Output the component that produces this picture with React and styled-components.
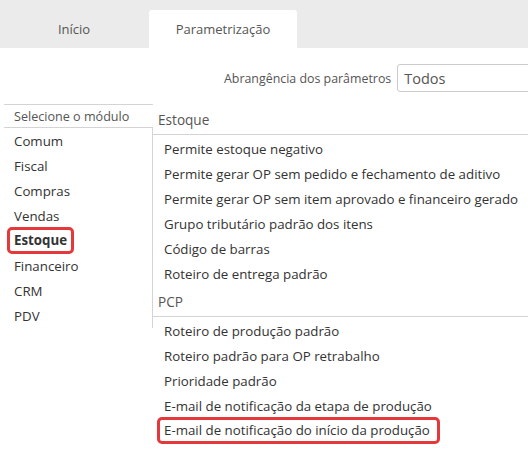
import React from 'react';
import styled, { createGlobalStyle } from 'styled-components';

const GlobalStyle = createGlobalStyle`
  html, body {
    margin: 0;
    padding: 0;
    background: #fff;
    overflow: hidden;
  }
  body {
    font-family: "Open Sans", "Noto Sans", sans-serif;
    font-size: 13.3px;
    color: #333;
  }
`

const Page = styled.div`
  width: 528px;
  height: 456px;
  overflow: hidden;
`

const TabBar = styled.div`
  display: flex;
  align-items: flex-end;
  height: 48px;
  background: #ebebeb;
  gap: 1px;
`

const Tab = styled.div`
  width: 148px;
  height: 38px;
  display: flex;
  align-items: center;
  justify-content: center;
  color: #555;
  font-size: 13px;
  background: ${p => (p.active ? '#fff' : 'transparent')};
  border-radius: 3px 3px 0 0;
`

const Filter = styled.div`
  display: flex;
  align-items: center;
  gap: 6px;
  height: 28px;
  margin-top: 16px;
  padding-left: 224px;
  white-space: nowrap;
`

const FilterLabel = styled.label`
  color: #555;
  font-size: 12.4px;
`

const Select = styled.div`
  flex: none;
  width: 160px;
  height: 26px;
  border: 1px solid #ccc;
  border-radius: 3px;
  padding-left: 6px;
  display: flex;
  align-items: center;
  font-size: 14.5px;
  color: #555;
`

const Body = styled.div`
  display: flex;
  margin-top: 12px;
  padding-left: 4px;
`

const Sidebar = styled.div`
  width: 149px;
  flex: none;
`

const SidebarHeader = styled.div`
  height: 22px;
  display: flex;
  align-items: center;
  padding-left: 10px;
  border-top: 1px solid #d4d4d4;
  border-bottom: 1px solid #d4d4d4;
  font-size: 12.6px;
  color: #555;
`

const ModuleList = styled.div`
  display: flex;
  flex-direction: column;
  padding-top: 1px;
  height: 199px;
  border-right: 1px solid #d4d4d4;
`

const Module = styled.div`
  height: 25px;
  display: flex;
  align-items: center;
  padding-left: 10px;
  font-weight: ${p => (p.selected ? 700 : 400)};
`

const Highlight = styled.span`
  display: inline-block;
  margin-left: -7px;
  padding: 0 ${p => (p.wide ? 7 : 4)}px 0 4px;
  height: 21px;
  line-height: 21px;
  border: 3px solid #e5383b;
  border-radius: 5px;
`

const Content = styled.div`
  flex: 1;
  display: flex;
  flex-direction: column;
`

const SectionHeader = styled.div`
  height: 30px;
  display: flex;
  align-items: center;
  padding-left: 5px;
  font-size: 13.6px;
  color: #555;
  border-bottom: 1px solid #d4d4d4;
`

const ParamList = styled.div`
  display: flex;
  flex-direction: column;
  padding-top: 1px;
`

const Param = styled.div`
  height: 25px;
  display: flex;
  align-items: center;
  padding-left: 11px;
  white-space: nowrap;
`

const sections = [
  {
    name: 'Estoque',
    items: [
      'Permite estoque negativo',
      'Permite gerar OP sem pedido e fechamento de aditivo',
      'Permite gerar OP sem item aprovado e financeiro gerado',
      'Grupo tributário padrão dos itens',
      'Código de barras',
      'Roteiro de entrega padrão',
    ],
  },
  {
    name: 'PCP',
    items: [
      'Roteiro de produção padrão',
      'Roteiro padrão para OP retrabalho',
      'Prioridade padrão',
      'E-mail de notificação da etapa de produção',
      'E-mail de notificação do início da produção',
    ],
  },
]

const modules = ['Comum', 'Fiscal', 'Compras', 'Vendas', 'Estoque', 'Financeiro', 'CRM', 'PDV']

const App = () => {
  return (
    <Page>
      <GlobalStyle />
      <TabBar>
        <Tab>Início</Tab>
        <Tab active>Parametrização</Tab>
      </TabBar>

      <Filter>
        <FilterLabel>Abrangência dos parâmetros</FilterLabel>
        <Select>Todos</Select>
      </Filter>

      <Body>
        <Sidebar>
          <SidebarHeader>Selecione o módulo</SidebarHeader>
          <ModuleList>
            {modules.map(m => (
              <Module key={m} selected={m === 'Estoque'}>
                {m === 'Estoque' ? <Highlight>{m}</Highlight> : m}
              </Module>
            ))}
          </ModuleList>
        </Sidebar>

        <Content>
          {sections.map(s => (
            <React.Fragment key={s.name}>
              <SectionHeader>{s.name}</SectionHeader>
              <ParamList>
                {s.items.map(item => (
                  <Param key={item}>
                    {item === 'E-mail de notificação do início da produção'
                      ? <Highlight wide>{item}</Highlight>
                      : item}
                  </Param>
                ))}
              </ParamList>
            </React.Fragment>
          ))}
        </Content>
      </Body>
    </Page>
  )
}

export default App;
